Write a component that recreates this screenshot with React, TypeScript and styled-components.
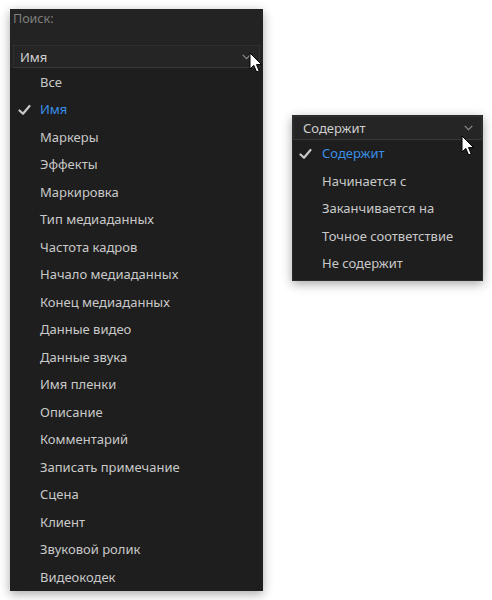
import React from "react";
import styled, { createGlobalStyle } from "styled-components";

const Global = createGlobalStyle`
  html, body { margin: 0; padding: 0; background: #ffffff; }
  body { font-family: "Noto Sans", "Open Sans", sans-serif; }
  * { box-sizing: border-box; }
`;

const Page = styled.div`
  position: relative;
  width: 492px;
  height: 600px;
  display: flex;
  align-items: flex-start;
  padding: 9px 0 0 10px;
  gap: 29px;
  overflow: hidden;
`;

const Panel = styled.div<{ $top?: number }>`
  display: flex;
  flex-direction: column;
  background: #1e1e1e;
  box-shadow: 0 3px 10px rgba(0, 0, 0, 0.35);
  margin-top: ${(p) => p.$top ?? 0}px;
`;

const LeftPanel = styled(Panel)`
  width: 253px;
  height: 582px;
`;

const RightPanel = styled(Panel)`
  width: 191px;
  height: 166px;
  border: 1px solid #2b2b2b;
`;

const SearchArea = styled.div`
  height: 36px;
  background: #232323;
  padding: 0 0 0 3px;
  display: flex;
  align-items: flex-start;
`;

const Label = styled.span`
  font-size: 12.5px;
  color: #7f7f7f;
  line-height: 18px;
  margin-top: 1px;
`;

const Header = styled.div<{ $h: number; $pad: number }>`
  height: ${(p) => p.$h}px;
  display: flex;
  align-items: center;
  justify-content: space-between;
  padding: 0 8px 0 ${(p) => p.$pad}px;
  background: #252525;
  border: 1px solid #2f2f2f;
  border-bottom-color: #383838;
  color: #cfcfcf;
  font-size: 13px;
`;

const LeftHeaderWrap = styled.div`
  background: #232323;
  padding: 0 3px;
`;

const List = styled.div<{ $pb?: number }>`
  display: flex;
  flex-direction: column;
  padding-bottom: ${(p) => p.$pb ?? 0}px;
`;

const Item = styled.div<{ $selected?: boolean; $indent: number }>`
  height: 27.5px;
  display: flex;
  align-items: center;
  padding-left: ${(p) => p.$indent}px;
  position: relative;
  font-size: 13px;
  color: ${(p) => (p.$selected ? "#3a8fe8" : "#c9c9c9")};
  white-space: nowrap;
`;

const CheckWrap = styled.span<{ $left: number }>`
  position: absolute;
  left: ${(p) => p.$left}px;
  top: 8px;
  width: 13px;
  height: 12px;
  display: flex;
`;

const Cursor = styled.svg<{ $x: number; $y: number }>`
  position: absolute;
  left: ${(p) => p.$x}px;
  top: ${(p) => p.$y}px;
`;

const Check = () => (
  <svg width="13" height="12" viewBox="0 0 13 12">
    <path d="M1.5 6.5 L5 9.8 L11.5 2" fill="none" stroke="#c8c8c8" strokeWidth="2.2" strokeLinecap="round" strokeLinejoin="round" />
  </svg>
);

const Chevron = () => (
  <svg width="9" height="6" viewBox="0 0 9 6">
    <path d="M0.7 0.8 L4.5 4.6 L8.3 0.8" fill="none" stroke="#8a8a8a" strokeWidth="1.2" />
  </svg>
);

const Arrow = ({ x, y }: { x: number; y: number }) => (
  <Cursor $x={x} $y={y} width="14" height="22" viewBox="0 0 14 22">
    <path d="M1 1 L1 17 L4.8 13.4 L7.6 20 L10.2 18.9 L7.5 12.6 L12.6 12.6 Z" fill="#ffffff" stroke="#000000" strokeWidth="1" strokeLinejoin="round" />
  </Cursor>
);

const leftItems = [
  "Все",
  "Имя",
  "Маркеры",
  "Эффекты",
  "Маркировка",
  "Тип медиаданных",
  "Частота кадров",
  "Начало медиаданных",
  "Конец медиаданных",
  "Данные видео",
  "Данные звука",
  "Имя пленки",
  "Описание",
  "Комментарий",
  "Записать примечание",
  "Сцена",
  "Клиент",
  "Звуковой ролик",
  "Видеокодек",
];

const rightItems = [
  "Содержит",
  "Начинается с",
  "Заканчивается на",
  "Точное соответствие",
  "Не содержит",
];

export default function App() {
  return (
    <>
      <Global />
      <Page>
        <LeftPanel>
          <SearchArea>
            <Label>Поиск:</Label>
          </SearchArea>
          <LeftHeaderWrap>
            <Header $h={23} $pad={6}>
              <span>Имя</span>
              <Chevron />
            </Header>
          </LeftHeaderWrap>
          <List>
            {leftItems.map((t) => (
              <Item key={t} $indent={30} $selected={t === "Имя"}>
                {t === "Имя" && (
                  <CheckWrap $left={8}>
                    <Check />
                  </CheckWrap>
                )}
                {t}
              </Item>
            ))}
          </List>
        </LeftPanel>
        <RightPanel $top={106}>
          <Header $h={24} $pad={9}>
            <span>Содержит</span>
            <Chevron />
          </Header>
          <List $pb={3}>
            {rightItems.map((t, i) => (
              <Item key={t} $indent={29} $selected={i === 0}>
                {i === 0 && (
                  <CheckWrap $left={6}>
                    <Check />
                  </CheckWrap>
                )}
                {t}
              </Item>
            ))}
          </List>
        </RightPanel>
        <Arrow x={249} y={52} />
        <Arrow x={461} y={135} />
      </Page>
    </>
  );
}
